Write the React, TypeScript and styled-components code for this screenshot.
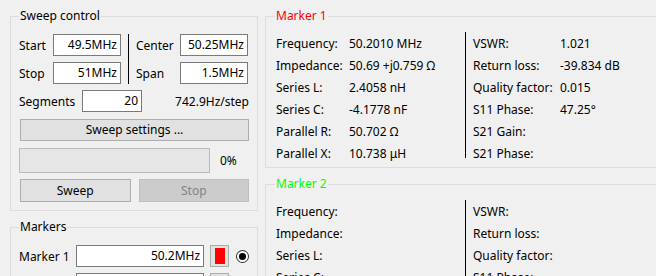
import React from "react";
import styled, { createGlobalStyle } from "styled-components";

const GlobalStyle = createGlobalStyle`
    html, body {
        margin: 0;
        padding: 0;
        background: #f0f0f0;
        overflow: hidden;
    }
    body {
        font-family: "Noto Sans", "Open Sans", sans-serif;
        font-size: 12px;
        color: #000;
    }
`;

const Window = styled.div`
    display: flex;
    gap: 7px;
    padding: 8px 0 0 10px;
    height: 268px;
    width: 700px;
    overflow: hidden;
`;

const Column = styled.div<{ $width: number }>`
    display: flex;
    flex-direction: column;
    gap: 8px;
    width: ${(p) => p.$width}px;
    flex-shrink: 0;
`;

const GroupBox = styled.fieldset<{ $pad?: number }>`
    margin: 0;
    border: 1px solid #dcdcdc;
    padding: 10px 8px 8px ${(p) => p.$pad ?? 8}px;
    min-width: 0;
`;

const Title = styled.legend<{ $color?: string }>`
    padding: 0 1px;
    line-height: 16px;
    color: ${(p) => p.$color ?? "#000"};
`;

const Row = styled.div`
    display: flex;
    align-items: center;
`;

const FreqGrid = styled.div`
    display: grid;
    grid-template-columns: 34px 68px;
    grid-auto-rows: 22px;
    row-gap: 6px;
    align-items: center;
`;

const FreqGridWide = styled(FreqGrid)`
    grid-template-columns: 44px 68px;
`;

const VLine = styled.div<{ $h: number; $ml: number; $mr: number }>`
    width: 1px;
    height: ${(p) => p.$h}px;
    background: #000;
    margin: 0 ${(p) => p.$mr}px 0 ${(p) => p.$ml}px;
    align-self: flex-start;
`;

const Field = styled.div<{ $w: number }>`
    box-sizing: border-box;
    width: ${(p) => p.$w}px;
    height: 22px;
    border: 1px solid #7a7a7a;
    background: #fff;
    text-align: right;
    padding: 0 3px;
    line-height: 20px;
    white-space: nowrap;
`;

const Label = styled.span<{ $w?: number }>`
    display: inline-block;
    width: ${(p) => (p.$w ? `${p.$w}px` : "auto")};
    white-space: nowrap;
`;

const Step = styled.span`
    margin-left: auto;
`;

const Button = styled.div<{ $disabled?: boolean }>`
    box-sizing: border-box;
    height: 22px;
    line-height: 20px;
    text-align: center;
    background: ${(p) => (p.$disabled ? "#cccccc" : "#e1e1e1")};
    border: 1px solid ${(p) => (p.$disabled ? "#bfbfbf" : "#adadad")};
    color: ${(p) => (p.$disabled ? "#838383" : "#000")};
`;

const Progress = styled.div`
    box-sizing: border-box;
    width: 191px;
    height: 25px;
    background: #e6e6e6;
    border: 1px solid #bcbcbc;
`;

const Percent = styled.span`
    margin-left: 10px;
`;

const ButtonPair = styled.div`
    display: grid;
    grid-template-columns: 1fr 1fr;
    gap: 8px;
    height: 23px;

    & > div {
        height: 23px;
        line-height: 21px;
    }
`;

const Stack = styled.div<{ $gap: number }>`
    display: flex;
    flex-direction: column;
    gap: ${(p) => p.$gap}px;
`;

const ColorButton = styled.div<{ $color: string }>`
    box-sizing: border-box;
    width: 19px;
    height: 22px;
    margin-left: 6px;
    border: 1px solid #adadad;
    background: #e1e1e1;
    display: flex;
    align-items: center;
    justify-content: center;

    &::after {
        content: "";
        width: 10px;
        height: 16px;
        background: ${(p) => p.$color};
    }
`;

const Radio = styled.div<{ $checked?: boolean }>`
    box-sizing: border-box;
    width: 13px;
    height: 13px;
    margin-left: 7px;
    border-radius: 50%;
    border: 1px solid #333;
    background: #fff;
    display: flex;
    align-items: center;
    justify-content: center;

    &::after {
        content: "";
        width: 7px;
        height: 7px;
        border-radius: 50%;
        background: ${(p) => (p.$checked ? "#000" : "transparent")};
    }
`;

const MarkerBox = styled(GroupBox)`
    width: 400px;
    padding-top: 8px;
    padding-bottom: 3px;

    & > legend {
        margin-left: -1px;
    }
`;

const MarkerBody = styled.div`
    display: flex;
`;

const InfoGrid = styled.div<{ $label: number; $w: number }>`
    display: grid;
    grid-template-columns: ${(p) => p.$label}px auto;
    grid-auto-rows: 22px;
    align-items: center;
    width: ${(p) => p.$w}px;
    white-space: nowrap;
`;

type Pair = [string, string];

const leftLabels = ["Frequency:", "Impedance:", "Series L:", "Series C:", "Parallel R:", "Parallel X:"];
const rightLabels = ["VSWR:", "Return loss:", "Quality factor:", "S11 Phase:", "S21 Gain:", "S21 Phase:"];

function MarkerInfo({ name, color, left, right }: { name: string; color: string; left: string[]; right: string[] }) {
    const l: Pair[] = leftLabels.map((k, i) => [k, left[i] ?? ""]);
    const r: Pair[] = rightLabels.map((k, i) => [k, right[i] ?? ""]);
    return (
        <MarkerBox $pad={10}>
            <Title $color={color}>{name}</Title>
            <MarkerBody>
                <InfoGrid $label={73} $w={189}>
                    {l.map(([k, v]) => (
                        <React.Fragment key={k}>
                            <span>{k}</span>
                            <span>{v}</span>
                        </React.Fragment>
                    ))}
                </InfoGrid>
                <VLine $h={126} $ml={0} $mr={7} />
                <InfoGrid $label={87} $w={180}>
                    {r.map(([k, v]) => (
                        <React.Fragment key={k}>
                            <span>{k}</span>
                            <span>{v}</span>
                        </React.Fragment>
                    ))}
                </InfoGrid>
            </MarkerBody>
        </MarkerBox>
    );
}

export default function App() {
    return (
        <>
            <GlobalStyle />
            <Window>
                <Column $width={248}>
                    <GroupBox>
                        <Title>Sweep control</Title>
                        <Stack $gap={0}>
                            <Row>
                                <FreqGrid>
                                    <Label>Start</Label>
                                    <Field $w={68}>49.5MHz</Field>
                                    <Label>Stop</Label>
                                    <Field $w={68}>51MHz</Field>
                                </FreqGrid>
                                <VLine $h={50} $ml={7} $mr={7} />
                                <FreqGridWide>
                                    <Label>Center</Label>
                                    <Field $w={68}>50.25MHz</Field>
                                    <Label>Span</Label>
                                    <Field $w={68}>1.5MHz</Field>
                                </FreqGridWide>
                            </Row>
                            <Row style={{ marginTop: 6 }}>
                                <Label $w={63}>Segments</Label>
                                <Field $w={60}>20</Field>
                                <Step>742.9Hz/step</Step>
                            </Row>
                            <Button style={{ marginTop: 7, marginLeft: 1 }}>Sweep settings ...</Button>
                            <Row style={{ marginTop: 7 }}>
                                <Progress />
                                <Percent>0%</Percent>
                            </Row>
                            <ButtonPair style={{ marginTop: 6, marginLeft: 1 }}>
                                <Button>Sweep</Button>
                                <Button $disabled>Stop</Button>
                            </ButtonPair>
                        </Stack>
                    </GroupBox>
                    <GroupBox>
                        <Title>Markers</Title>
                        <Stack $gap={6}>
                            <Row>
                                <Label $w={57}>Marker 1</Label>
                                <Field $w={129}>50.2MHz</Field>
                                <ColorButton $color="#ff0000" />
                                <Radio $checked />
                            </Row>
                            <Row>
                                <Label $w={57}>Marker 2</Label>
                                <Field $w={129}>50.5MHz</Field>
                                <ColorButton $color="#00ff00" />
                                <Radio />
                            </Row>
                        </Stack>
                    </GroupBox>
                </Column>
                <Column $width={400}>
                    <MarkerInfo
                        name="Marker 1"
                        color="#ff0000"
                        left={["50.2010 MHz", "50.69 +j0.759 Ω", "2.4058 nH", "-4.1778 nF", "50.702 Ω", "10.738 μH"]}
                        right={["1.021", "-39.834 dB", "0.015", "47.25°"]}
                    />
                    <MarkerInfo name="Marker 2" color="#00ff00" left={[]} right={[]} />
                </Column>
            </Window>
        </>
    );
}
